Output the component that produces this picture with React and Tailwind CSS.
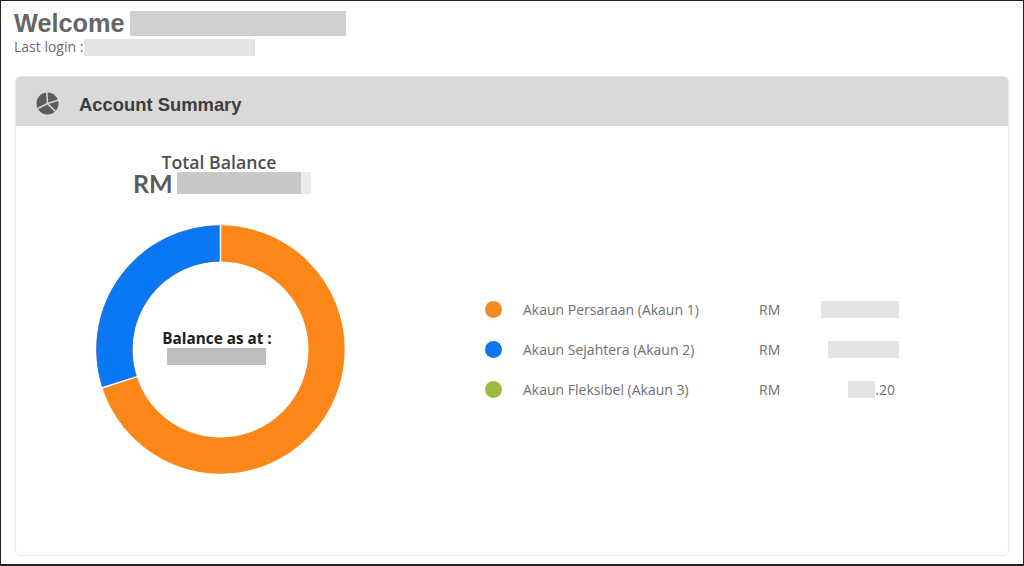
import React from 'react';

const rows = [
  { name: 'Akaun Persaraan (Akaun 1)', dot: 'bg-[#f58a23]', blur: 'w-[78px]', extra: null },
  { name: 'Akaun Sejahtera (Akaun 2)', dot: 'bg-[#0a78f0]', blur: 'w-[71px]', extra: null },
  { name: 'Akaun Fleksibel (Akaun 3)', dot: 'bg-[#9dba3f]', blur: 'w-[27px]', extra: '.20' },
];

function Donut() {
  return (
    <svg width="250" height="250" viewBox="0 0 250 250">
      <circle cx="125.5" cy="125.5" r="106.1" fill="none" stroke="#fc8718" strokeWidth="36.2" />
      {/* blue slice, 252deg to 360deg clockwise from the top */}
      <path d="M 125.5 19.4 A 106.1 106.1 0 0 0 24.6 158.3" fill="none" stroke="#0a78f5" strokeWidth="36.2" />
      <line x1="125.5" y1="0" x2="125.5" y2="38" stroke="#ffffff" strokeWidth="1.5" />
      <line x1="6" y1="164.3" x2="42" y2="152.6" stroke="#ffffff" strokeWidth="1.5" />
    </svg>
  );
}

function PieIcon() {
  return (
    <svg className="mt-[3px]" width="23" height="23" viewBox="0 0 23 23">
      <circle cx="11.5" cy="11.5" r="11" fill="#5c5c5c" />
      <g stroke="#d9d9d9" strokeWidth="1.6">
        <line x1="11.5" y1="11.5" x2="10.8" y2="0" />
        <line x1="11.5" y1="11.5" x2="23" y2="8" />
        <line x1="11.5" y1="11.5" x2="20" y2="20" />
        <line x1="11.5" y1="11.5" x2="1" y2="17" />
      </g>
    </svg>
  );
}

export default function App() {
  return (
    <div className="w-[1024px] h-[566px] overflow-hidden bg-white border-t border-l border-r border-b-2 border-[#222222] font-['Open_Sans','Liberation_Sans',sans-serif]">
      <div className="flex items-center pl-[13px] pt-[9px] h-[26px] box-content">
        <h1 className="font-['Liberation_Sans',sans-serif] font-bold text-[25.3px] leading-[26px] text-[#666666]">Welcome</h1>
        <div className="ml-[5px] w-[216px] h-[25px] bg-[#cfcfcf]"></div>
      </div>
      <div className="flex items-center pl-[13px] h-[18px] mt-[2px]">
        <span className="w-[70px] text-[14px] leading-[18px] text-[#6b6b6b] whitespace-nowrap">Last login :</span>
        <div className="w-[171px] h-[17px] bg-[#e4e4e4]"></div>
      </div>

      <div className="ml-[14px] mt-[20px] w-[994px] h-[480px] rounded-[5px] border border-[#e6e6e6] overflow-hidden">
        <div className="h-[49px] bg-[#d9d9d9] flex items-center pl-[20px]">
          <PieIcon />
          <h2 className="ml-[20px] mt-[6px] font-['Liberation_Sans',sans-serif] font-bold text-[18.4px] leading-[22px] text-[#3d3d3d]">Account Summary</h2>
        </div>

        <div className="flex">
          <div className="w-[408px] flex flex-col items-center">
            <div className="mt-[26px] text-[17.7px] leading-[20px] font-semibold text-[#4f4f4f] ml-[-2px]">Total Balance</div>
            <div className="flex items-center h-[24px] mt-[-1px] self-start ml-[117px]">
              <span className="font-['Lato',sans-serif] font-bold text-[25px] leading-[24px] text-[#5b5b5b]">RM</span>
              <div className="ml-[4px] w-[124px] h-[22px] bg-[#c8c8c8]"></div>
              <div className="w-[10px] h-[22px] bg-[#ececec]"></div>
            </div>
            <div className="relative mt-[29px] w-[250px] h-[250px]">
              <Donut />
              <div className="absolute inset-0 flex flex-col items-center justify-center pb-[6px]">
                <div className="text-[15.3px] leading-[20px] font-bold text-[#1d1d1d] ml-[-6px]">Balance as at :</div>
                <div className="w-[99px] h-[17px] bg-[#bdbdbd] ml-[-7px]"></div>
              </div>
            </div>
          </div>

          <div className="ml-[60px] mt-[173px] flex flex-col gap-[20.25px]">
            {rows.map((r) => (
              <div key={r.name} className="flex items-center h-[20px] text-[14px] text-[#6f6f6f]">
                <div className={`ml-[1px] w-[17px] h-[17px] rounded-full ${r.dot}`}></div>
                <div className="ml-[21px] w-[236px] whitespace-nowrap">{r.name}</div>
                <div className="w-[40px]">RM</div>
                <div className="w-[100px] flex justify-end items-center">
                  <div className={`h-[17px] bg-[#e3e3e3] ${r.blur}`}></div>
                  {r.extra && <span className="mr-[4px]">{r.extra}</span>}
                </div>
              </div>
            ))}
          </div>
        </div>
      </div>
    </div>
  );
}
